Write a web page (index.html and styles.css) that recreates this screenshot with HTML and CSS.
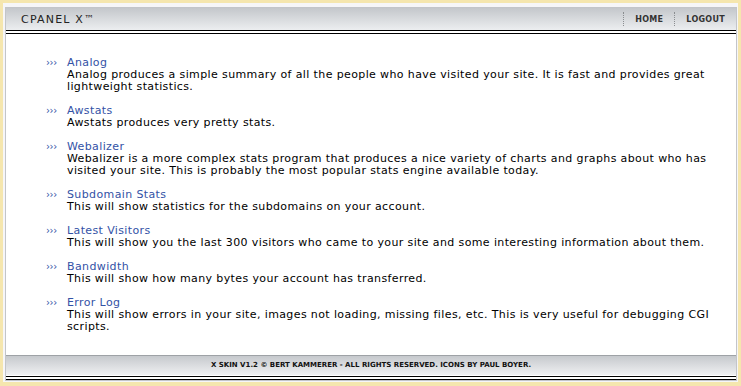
FILE: index.html
```html
<!DOCTYPE html>
<html lang="en">
<head>
    <meta charset="UTF-8">
    <title>cPanel X - Web Statistics</title>
    <link rel="stylesheet" href="styles.css">
</head>
<body>
    <div class="frame">
        <div class="panel">
            <div class="topbar">
                <div class="brand">CPANEL X<span class="tm">™</span></div>
                <ul class="nav">
                    <li><a href="#">HOME</a></li>
                    <li><a href="#">LOGOUT</a></li>
                </ul>
            </div>
            <div class="rule"></div>

            <div class="content">
                <ul class="stats">
                    <li>
                        <a href="#">Analog</a>
                        <p>Analog produces a simple summary of all the people who have visited your site. It is fast and provides great lightweight statistics.</p>
                    </li>
                    <li>
                        <a href="#">Awstats</a>
                        <p>Awstats produces very pretty stats.</p>
                    </li>
                    <li>
                        <a href="#">Webalizer</a>
                        <p>Webalizer is a more complex stats program that produces a nice variety of charts and graphs about who has visited your site. This is probably the most popular stats engine available today.</p>
                    </li>
                    <li>
                        <a href="#">Subdomain Stats</a>
                        <p>This will show statistics for the subdomains on your account.</p>
                    </li>
                    <li>
                        <a href="#">Latest Visitors</a>
                        <p>This will show you the last 300 visitors who came to your site and some interesting information about them.</p>
                    </li>
                    <li>
                        <a href="#">Bandwidth</a>
                        <p>This will show how many bytes your account has transferred.</p>
                    </li>
                    <li>
                        <a href="#">Error Log</a>
                        <p>This will show errors in your site, images not loading, missing files, etc. This is very useful for debugging CGI scripts.</p>
                    </li>
                </ul>
            </div>

            <div class="footer">X SKIN V1.2 © BERT KAMMERER - ALL RIGHTS RESERVED. ICONS BY PAUL BOYER.</div>
            <div class="rule"></div>
        </div>
    </div>
</body>
</html>
```

FILE: styles.css
```css
html, body { margin: 0; padding: 0; }
body { background: #f5e6ae; font-family: "DejaVu Sans", Verdana, sans-serif; font-size: 11px; color: #000; }
.frame { margin: 3px; padding: 4px 1px 1px 2px; background: #f6f6f8; height: 374px; }
.panel { border: 1px solid #c3c5c9; background: #fff; height: 372px; display: flex; flex-direction: column; }

.topbar { height: 22px; display: flex; align-items: center; justify-content: space-between; background: linear-gradient(#c4c7cb, #eceef0); }
.brand { padding-left: 15px; font-size: 11px; letter-spacing: 1.2px; color: #222; }
.brand .tm { font-size: 10px; vertical-align: 1px; letter-spacing: 0; }
.nav { list-style: none; margin: 0; padding: 0; display: flex; }
.nav li { border-left: 1px dotted #8a8d90; padding: 0 11px; height: 14px; line-height: 14px; }
.nav a { color: #333; text-decoration: none; font-weight: bold; font-size: 8px; letter-spacing: 0.3px; }

.rule { height: 2px; border-top: 1px solid #000; border-bottom: 1px solid #000; background: #fff; }

.content { flex: 1; padding: 23px 17px 0 40px; }
.stats { list-style: none; margin: 0; padding: 0; }
.stats li { margin-bottom: 12px; padding-left: 21px; position: relative; line-height: 12px; letter-spacing: 0.38px; }
.stats li::before { content: "›››"; position: absolute; left: 0; top: 0; color: #3352a6; font-size: 10px; letter-spacing: -0.4px; }
.stats a { color: #3352a6; text-decoration: none; }
.stats p { margin: 0; }

.footer { height: 19px; border-top: 1px solid #9ea2a6; background: linear-gradient(#c6c9cd, #eff0f2); text-align: center; line-height: 19px; font-size: 7px; font-weight: bold; letter-spacing: 0; color: #111; margin-bottom: 1px; }
```
